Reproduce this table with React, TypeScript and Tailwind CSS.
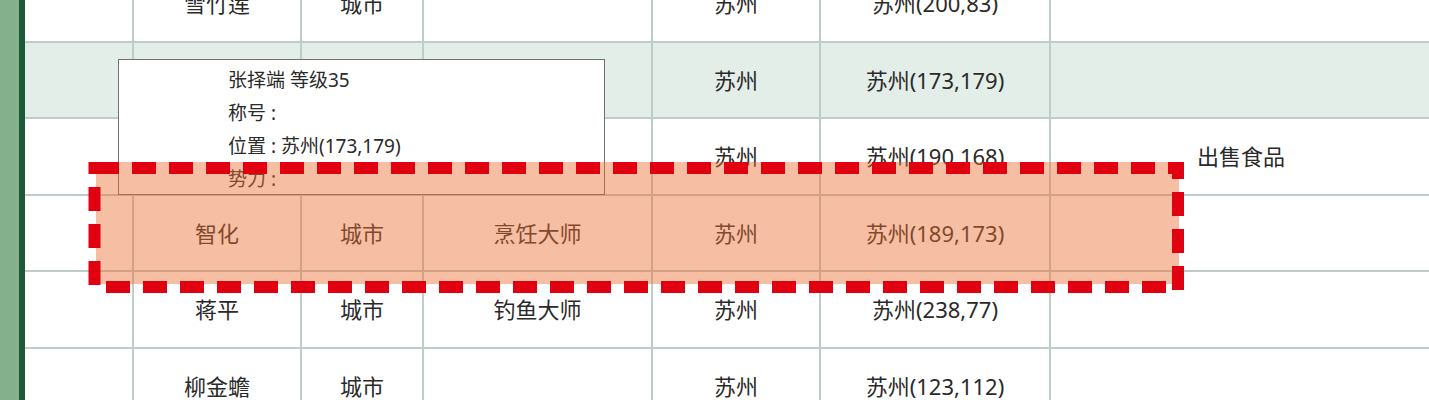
import React from 'react'

const FONT = { fontFamily: '"Noto Sans", "Noto Sans CJK SC", sans-serif' }

type Row = {
  name: string
  kind: string
  title: string
  city: string
  pos: string
  note: string
  h: string
  bg: string
}

// rows 2 and 3 sit under the tooltip, so their left cells stay empty
const ROWS: Row[] = [
  { name: '雪竹莲', kind: '城市', title: '', city: '苏州', pos: '苏州(200,83)', note: '', h: 'h-[77px]', bg: 'bg-white' },
  { name: '', kind: '', title: '', city: '苏州', pos: '苏州(173,179)', note: '', h: 'h-[76px]', bg: 'bg-[#e3eee8]' },
  { name: '', kind: '', title: '', city: '苏州', pos: '苏州(190,168)', note: '出售食品', h: 'h-[77px]', bg: 'bg-white' },
  { name: '智化', kind: '城市', title: '烹饪大师', city: '苏州', pos: '苏州(189,173)', note: '', h: 'h-[76px]', bg: 'bg-white' },
  { name: '蒋平', kind: '城市', title: '钓鱼大师', city: '苏州', pos: '苏州(238,77)', note: '', h: 'h-[77px]', bg: 'bg-white' },
  { name: '柳金蟾', kind: '城市', title: '', city: '苏州', pos: '苏州(123,112)', note: '', h: 'h-[77px]', bg: 'bg-white' },
]

const cell = 'flex items-center justify-center border-r-2 border-[#bfcdc8]'

function TableRow({ r }: { r: Row }) {
  return (
    <div className={`flex ${r.h} ${r.bg} border-b-2 border-[#bfcdc8] text-[22px] text-[#2a2a2a]`}>
      <div className={`${cell} w-[109px] shrink-0`} />
      <div className={`${cell} w-[168px] shrink-0`}>{r.name}</div>
      <div className={`${cell} w-[122px] shrink-0`}>{r.kind}</div>
      <div className={`${cell} w-[229px] shrink-0`}>{r.title}</div>
      <div className={`${cell} w-[168px] shrink-0`}>{r.city}</div>
      <div className={`${cell} w-[230px] shrink-0`}>{r.pos}</div>
      <div className="flex flex-1 items-center pl-[146px]">{r.note}</div>
    </div>
  )
}

function Tooltip() {
  return (
    <div className="absolute left-[93px] top-[59px] h-[136px] w-[487px] border border-[#707070] bg-white pl-[109px] pt-[4px] text-[19px] leading-[33px] text-[#2a2a2a]">
      <div>张择端 等级35</div>
      <div>称号 : </div>
      <div>位置 : 苏州(173,179)</div>
      <div>势力 : </div>
    </div>
  )
}

function Highlight() {
  const red = '#e0000f'
  return (
    <svg className="pointer-events-none absolute left-0 top-0" width="1429" height="400">
      <rect x="96" y="162" width="1083" height="122" fill="rgba(236,110,50,0.45)" />
      <line x1="88.5" y1="168" x2="1184" y2="168" stroke={red} strokeWidth="12" strokeDasharray="24 13" strokeDashoffset="30.5" />
      <line x1="94.5" y1="162" x2="94.5" y2="293" stroke={red} strokeWidth="12" strokeDasharray="24 13" strokeDashoffset="12" />
      <line x1="1178" y1="162" x2="1178" y2="293" stroke={red} strokeWidth="12" strokeDasharray="24 13" strokeDashoffset="7" />
      <line x1="100" y1="287" x2="1172" y2="287" stroke={red} strokeWidth="12" strokeDasharray="24 13" strokeDashoffset="31" />
    </svg>
  )
}

export default function App() {
  return (
    <div className="relative flex h-[400px] w-[1429px] overflow-hidden bg-white" style={FONT}>
      <div className="w-[19px] shrink-0 bg-[#84b08c]" />
      <div className="w-[6px] shrink-0 bg-[#1b5a34]" />
      <div className="relative flex-1">
        <div className="mt-[-34px]">
          {ROWS.map((r, i) => (
            <TableRow key={i} r={r} />
          ))}
        </div>
        <Tooltip />
      </div>
      <Highlight />
    </div>
  )
}
